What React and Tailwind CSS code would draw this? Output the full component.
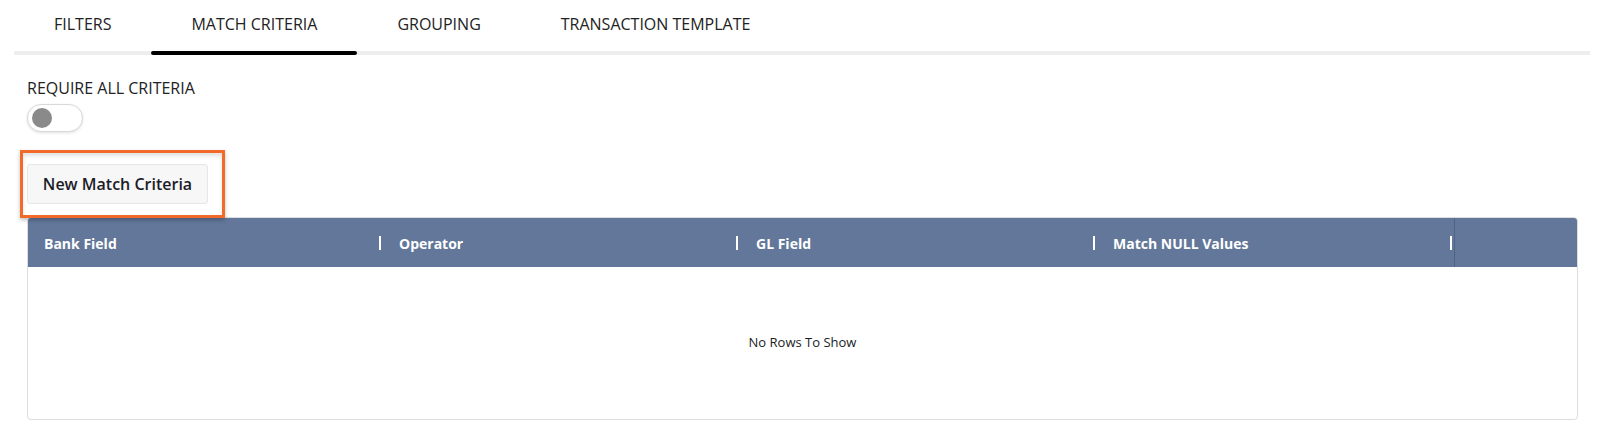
import { useState } from 'react'

const tabs = ['Filters', 'Match Criteria', 'Grouping', 'Transaction Template']
const columns = ['Bank Field', 'Operator', 'GL Field', 'Match NULL Values']

export default function App() {
  const [active, setActive] = useState(1)
  const [requireAll, setRequireAll] = useState(false)

  return (
    <div className="h-[441px] w-[1606px] bg-white font-['Open_Sans',sans-serif] text-[#222]">
      {/* tabs */}
      <div className="ml-[14px] mr-[16px] flex items-end">
        {tabs.map((tab, i) => (
          <button
            key={tab}
            type="button"
            onClick={() => setActive(i)}
            className="flex flex-col"
          >
            <span className="flex h-[51px] items-center px-10 pb-[3px] text-[16px] uppercase text-[#222]">
              {tab}
            </span>
            <span
              className={
                i === active
                  ? 'h-[4px] w-full rounded-[3px] bg-black'
                  : 'h-[4px] w-full bg-[#eeeeee]'
              }
            />
          </button>
        ))}
        <div className="h-[4px] flex-1 bg-[#eeeeee]" />
      </div>

      <main className="px-[27px]">
        <p className="mt-[21px] text-[16px] leading-6 uppercase text-[#222]">Require All Criteria</p>
        <button
          type="button"
          onClick={() => setRequireAll(!requireAll)}
          className={`mt-[4px] flex h-[28px] w-[56px] items-center rounded-full border border-[#d9d9d9] px-[4px] shadow-[0_1px_3px_rgba(0,0,0,0.12)] ${
            requireAll ? 'justify-end bg-[#627799]' : 'justify-start bg-white'
          }`}
        >
          <span className="h-[20px] w-[20px] rounded-full bg-[#8a8a8a]" />
        </button>

        <div className="relative z-10 mt-[18px] -ml-[7px] h-[68px] w-[205px] border-[3px] border-[#f26a2a] pl-[4px] pt-[11px] shadow-[inset_0_3px_4px_rgba(0,0,0,0.12),0_2px_4px_rgba(0,0,0,0.25)]">
          <button
            type="button"
            className="flex h-[40px] w-[181px] items-center justify-center rounded-[3px] border border-[#e6e6e6] bg-[#f7f7f7] text-[16px] font-semibold text-[#1c1c28]"
          >
            New Match Criteria
          </button>
        </div>

        {/* grid */}
        <div className="-mt-[1px] w-[1551px] overflow-hidden rounded-[4px] border border-[#dddddd]">
          <div className="grid h-[49px] grid-cols-[355px_357px_357px_357px_1fr] bg-[#627799] text-white">
            {columns.map((col) => (
              <div key={col} className="flex items-center justify-between pl-4 pr-[2px]">
                <span className="pt-[1px] text-[14px] font-bold">{col}</span>
                <span className="h-[14px] w-[2px] bg-white" />
              </div>
            ))}
            <div className="border-l border-[#4f6384]" />
          </div>
          <div className="flex h-[152px] items-center justify-center text-[13px] text-[#181d1f]">
            No Rows To Show
          </div>
        </div>
      </main>
    </div>
  )
}
